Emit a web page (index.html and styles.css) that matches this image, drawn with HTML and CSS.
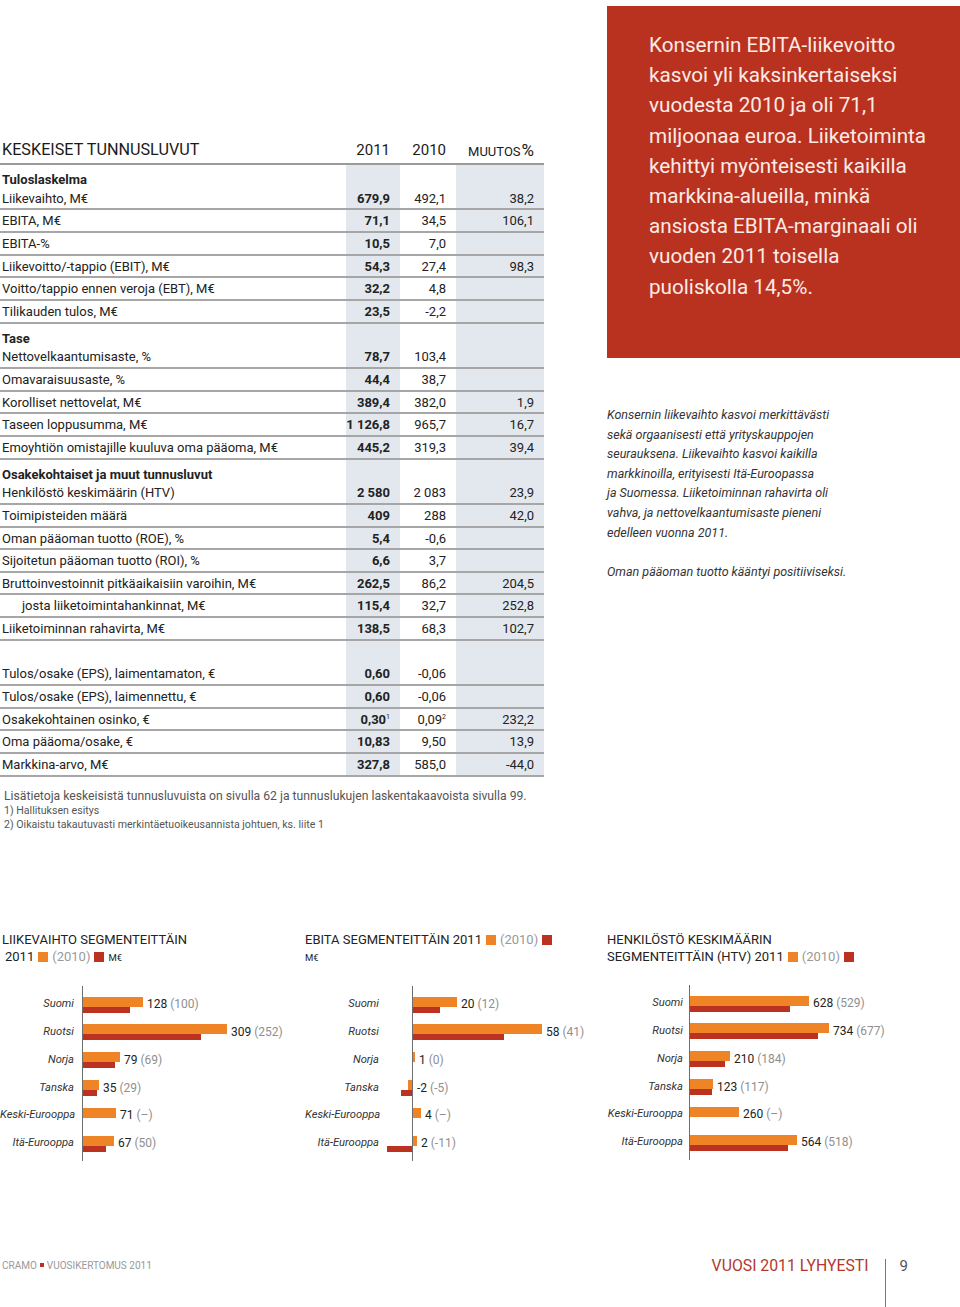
FILE: index.html
```html
<!DOCTYPE html>
<html lang="fi">
<head>
<meta charset="utf-8">
<title>Vuosi 2011 lyhyesti</title>
<link rel="stylesheet" href="styles.css">
</head>
<body>
<div class="page">
  <div class="top">
    <div class="left">
      <div class="thead">
        <div class="ttl">KESKEISET TUNNUSLUVUT</div>
        <div class="h">2011</div>
        <div class="h">2010</div>
        <div class="h"><span class="sc">MUUTOS</span><span class="pc">%</span></div>
      </div>
      <div class="tbody">
        <div class="row sec"><div class="lab">Tuloslaskelma</div><div class="v a"></div><div class="v b"></div><div class="v c"></div></div>
        <div class="row"><div class="lab">Liikevaihto, M€</div><div class="v a">679,9</div><div class="v b">492,1</div><div class="v c">38,2</div></div>
        <div class="row"><div class="lab">EBITA, M€</div><div class="v a">71,1</div><div class="v b">34,5</div><div class="v c">106,1</div></div>
        <div class="row"><div class="lab">EBITA-%</div><div class="v a">10,5</div><div class="v b">7,0</div><div class="v c"></div></div>
        <div class="row"><div class="lab">Liikevoitto/-tappio (EBIT), M€</div><div class="v a">54,3</div><div class="v b">27,4</div><div class="v c">98,3</div></div>
        <div class="row"><div class="lab">Voitto/tappio ennen veroja (EBT), M€</div><div class="v a">32,2</div><div class="v b">4,8</div><div class="v c"></div></div>
        <div class="row"><div class="lab">Tilikauden tulos, M€</div><div class="v a">23,5</div><div class="v b">-2,2</div><div class="v c"></div></div>
        <div class="row sec"><div class="lab">Tase</div><div class="v a"></div><div class="v b"></div><div class="v c"></div></div>
        <div class="row"><div class="lab">Nettovelkaantumisaste, %</div><div class="v a">78,7</div><div class="v b">103,4</div><div class="v c"></div></div>
        <div class="row"><div class="lab">Omavaraisuusaste, %</div><div class="v a">44,4</div><div class="v b">38,7</div><div class="v c"></div></div>
        <div class="row"><div class="lab">Korolliset nettovelat, M€</div><div class="v a">389,4</div><div class="v b">382,0</div><div class="v c">1,9</div></div>
        <div class="row"><div class="lab">Taseen loppusumma, M€</div><div class="v a">1 126,8</div><div class="v b">965,7</div><div class="v c">16,7</div></div>
        <div class="row"><div class="lab">Emoyhtiön omistajille kuuluva oma pääoma, M€</div><div class="v a">445,2</div><div class="v b">319,3</div><div class="v c">39,4</div></div>
        <div class="row sec"><div class="lab">Osakekohtaiset ja muut tunnusluvut</div><div class="v a"></div><div class="v b"></div><div class="v c"></div></div>
        <div class="row"><div class="lab">Henkilöstö keskimäärin (HTV)</div><div class="v a">2 580</div><div class="v b">2 083</div><div class="v c">23,9</div></div>
        <div class="row"><div class="lab">Toimipisteiden määrä</div><div class="v a">409</div><div class="v b">288</div><div class="v c">42,0</div></div>
        <div class="row"><div class="lab">Oman pääoman tuotto (ROE), %</div><div class="v a">5,4</div><div class="v b">-0,6</div><div class="v c"></div></div>
        <div class="row"><div class="lab">Sijoitetun pääoman tuotto (ROI), %</div><div class="v a">6,6</div><div class="v b">3,7</div><div class="v c"></div></div>
        <div class="row"><div class="lab">Bruttoinvestoinnit pitkäaikaisiin varoihin, M€</div><div class="v a">262,5</div><div class="v b">86,2</div><div class="v c">204,5</div></div>
        <div class="row"><div class="lab ind">josta liiketoimintahankinnat, M€</div><div class="v a">115,4</div><div class="v b">32,7</div><div class="v c">252,8</div></div>
        <div class="row"><div class="lab">Liiketoiminnan rahavirta, M€</div><div class="v a">138,5</div><div class="v b">68,3</div><div class="v c">102,7</div></div>
        <div class="row sec"><div class="lab"></div><div class="v a"></div><div class="v b"></div><div class="v c"></div></div>
        <div class="row"><div class="lab">Tulos/osake (EPS), laimentamaton, €</div><div class="v a">0,60</div><div class="v b">-0,06</div><div class="v c"></div></div>
        <div class="row"><div class="lab">Tulos/osake (EPS), laimennettu, €</div><div class="v a">0,60</div><div class="v b">-0,06</div><div class="v c"></div></div>
        <div class="row"><div class="lab">Osakekohtainen osinko, €</div><div class="v a">0,30<sup>1</sup></div><div class="v b">0,09<sup>2</sup></div><div class="v c">232,2</div></div>
        <div class="row"><div class="lab">Oma pääoma/osake, €</div><div class="v a">10,83</div><div class="v b">9,50</div><div class="v c">13,9</div></div>
        <div class="row"><div class="lab">Markkina-arvo, M€</div><div class="v a">327,8</div><div class="v b">585,0</div><div class="v c">-44,0</div></div>
      </div>
      <div class="notes">
        <p class="n1">Lisätietoja keskeisistä tunnusluvuista on sivulla 62 ja tunnuslukujen laskentakaavoista sivulla 99.</p>
        <p class="n2">1) Hallituksen esitys</p>
        <p class="n2">2) Oikaistu takautuvasti merkintäetuoikeusannista johtuen, ks. liite 1</p>
      </div>
    </div>
    <div class="right">
      <div class="redbox">
        <p>Konsernin EBITA-liikevoitto<br>kasvoi yli kaksinkertaiseksi<br>vuodesta 2010 ja oli 71,1<br>miljoonaa euroa. Liiketoiminta<br>kehittyi myönteisesti kaikilla<br>markkina-alueilla, minkä<br>ansiosta EBITA-marginaali oli<br>vuoden 2011 toisella<br>puoliskolla 14,5%.</p>
      </div>
      <p class="ital">Konsernin liikevaihto kasvoi merkittävästi<br>sekä orgaanisesti että yrityskauppojen<br>seurauksena. Liikevaihto kasvoi kaikilla<br>markkinoilla, erityisesti Itä-Euroopassa<br>ja Suomessa. Liiketoiminnan rahavirta oli<br>vahva, ja nettovelkaantumisaste pieneni<br>edelleen vuonna 2011.</p>
      <p class="ital second">Oman pääoman tuotto kääntyi positiiviseksi.</p>
    </div>
  </div>

  <div class="charts">
    <div class="chart ch1">
      <div class="ctitle">LIIKEVAIHTO SEGMENTEITTÄIN<br><span class="sub">2011</span><i class="sq o"></i><span class="g">(2010)</span><i class="sq r"></i><span class="unit">M€</span></div>
      <div class="cbody">
        <div class="labels"><div>Suomi</div><div>Ruotsi</div><div>Norja</div><div>Tanska</div><div>Keski-Eurooppa</div><div>Itä-Eurooppa</div></div>
        <div class="plot">
          <div class="brow"><div class="bars"><div class="bo" style="width:60px"></div><div class="br" style="width:47px"></div></div><span class="val">128 <span class="g">(100)</span></span></div>
          <div class="brow"><div class="bars"><div class="bo" style="width:144px"></div><div class="br" style="width:118px"></div></div><span class="val">309 <span class="g">(252)</span></span></div>
          <div class="brow"><div class="bars"><div class="bo" style="width:37px"></div><div class="br" style="width:32px"></div></div><span class="val">79 <span class="g">(69)</span></span></div>
          <div class="brow"><div class="bars"><div class="bo" style="width:16px"></div><div class="br" style="width:14px"></div></div><span class="val">35 <span class="g">(29)</span></span></div>
          <div class="brow"><div class="bars"><div class="bo" style="width:33px"></div><div class="br" style="width:0px"></div></div><span class="val">71 <span class="g">(–)</span></span></div>
          <div class="brow"><div class="bars"><div class="bo" style="width:31px"></div><div class="br" style="width:23px"></div></div><span class="val">67 <span class="g">(50)</span></span></div>
        </div>
      </div>
    </div>

    <div class="chart ch2">
      <div class="ctitle">EBITA SEGMENTEITTÄIN 2011<i class="sq o"></i><span class="g">(2010)</span><i class="sq r"></i><br><span class="unit">M€</span></div>
      <div class="cbody">
        <div class="labels"><div>Suomi</div><div>Ruotsi</div><div>Norja</div><div>Tanska</div><div>Keski-Eurooppa</div><div>Itä-Eurooppa</div></div>
        <div class="negcol">
          <div class="brow"><div class="bars"><div class="bo" style="width:0px"></div><div class="br" style="width:0px"></div></div></div>
          <div class="brow"><div class="bars"><div class="bo" style="width:0px"></div><div class="br" style="width:0px"></div></div></div>
          <div class="brow"><div class="bars"><div class="bo" style="width:0px"></div><div class="br" style="width:0px"></div></div></div>
          <div class="brow"><div class="bars"><div class="bo" style="width:4px"></div><div class="br" style="width:11px"></div></div></div>
          <div class="brow"><div class="bars"><div class="bo" style="width:0px"></div><div class="br" style="width:0px"></div></div></div>
          <div class="brow"><div class="bars"><div class="bo" style="width:0px"></div><div class="br" style="width:25px"></div></div></div>
        </div>
        <div class="plot">
          <div class="brow"><div class="bars"><div class="bo" style="width:44px"></div><div class="br" style="width:27px"></div></div><span class="val">20 <span class="g">(12)</span></span></div>
          <div class="brow"><div class="bars"><div class="bo" style="width:129px"></div><div class="br" style="width:91px"></div></div><span class="val">58 <span class="g">(41)</span></span></div>
          <div class="brow"><div class="bars"><div class="bo" style="width:2px"></div><div class="br" style="width:0px"></div></div><span class="val">1 <span class="g">(0)</span></span></div>
          <div class="brow"><div class="bars"><div class="bo" style="width:0px"></div><div class="br" style="width:0px"></div></div><span class="val">-2 <span class="g">(-5)</span></span></div>
          <div class="brow"><div class="bars"><div class="bo" style="width:8px"></div><div class="br" style="width:0px"></div></div><span class="val">4 <span class="g">(–)</span></span></div>
          <div class="brow"><div class="bars"><div class="bo" style="width:4px"></div><div class="br" style="width:0px"></div></div><span class="val">2 <span class="g">(-11)</span></span></div>
        </div>
      </div>
    </div>

    <div class="chart ch3">
      <div class="ctitle">HENKILÖSTÖ KESKIMÄÄRIN<br>SEGMENTEITTÄIN (HTV) 2011<i class="sq o"></i><span class="g">(2010)</span><i class="sq r"></i></div>
      <div class="cbody">
        <div class="labels"><div>Suomi</div><div>Ruotsi</div><div>Norja</div><div>Tanska</div><div>Keski-Eurooppa</div><div>Itä-Eurooppa</div></div>
        <div class="plot">
          <div class="brow"><div class="bars"><div class="bo" style="width:119px"></div><div class="br" style="width:100px"></div></div><span class="val">628 <span class="g">(529)</span></span></div>
          <div class="brow"><div class="bars"><div class="bo" style="width:139px"></div><div class="br" style="width:128px"></div></div><span class="val">734 <span class="g">(677)</span></span></div>
          <div class="brow"><div class="bars"><div class="bo" style="width:40px"></div><div class="br" style="width:35px"></div></div><span class="val">210 <span class="g">(184)</span></span></div>
          <div class="brow"><div class="bars"><div class="bo" style="width:23px"></div><div class="br" style="width:22px"></div></div><span class="val">123 <span class="g">(117)</span></span></div>
          <div class="brow"><div class="bars"><div class="bo" style="width:49px"></div><div class="br" style="width:0px"></div></div><span class="val">260 <span class="g">(–)</span></span></div>
          <div class="brow"><div class="bars"><div class="bo" style="width:107px"></div><div class="br" style="width:98px"></div></div><span class="val">564 <span class="g">(518)</span></span></div>
        </div>
      </div>
    </div>
  </div>

  <footer class="foot">
    <div class="fl">CRAMO<i class="dot"></i>VUOSIKERTOMUS 2011</div>
    <div class="fr"><span class="sect">VUOSI 2011 LYHYESTI</span><span class="pn">9</span></div>
  </footer>
</div>
</body>
</html>
```

FILE: styles.css
```css
* { box-sizing: border-box; }

body {
  margin: 0;
  background: #fff;
  color: #222;
  font-family: Roboto, "DejaVu Sans", sans-serif;
}

.page {
  width: 960px;
}

.top {
  display: grid;
  grid-template-columns: 544px 353px;
  column-gap: 63px;
  align-items: start;
}

/* ---------- key figures table ---------- */
.left {
  padding-top: 137px;
}

.thead,
.row {
  display: grid;
  grid-template-columns: 346px 54px 56px 88px;
}

.thead {
  height: 28px;
  border-bottom: 2px solid #9a9a9a;
  line-height: 26px;
  font-size: 15px;
  color: #1a1a1a;
}

.thead .ttl {
  padding-left: 2px;
  font-size: 16.2px;
}

.thead .h {
  text-align: right;
  padding-right: 10px;
  white-space: nowrap;
}

.thead .sc {
  font-size: 13px;
  margin-right: 1px;
}

.thead .pc {
  font-size: 17px;
}

.row {
  height: 22.67px;
  border-bottom: 2px solid #a6a6a6;
  font-size: 13px;
  line-height: 18.67px;
  padding-top: 2px;
  color: #222;
}

.row.sec {
  border-bottom: 0;
  padding-top: 0;
}

.row.sec .lab {
  font-weight: 700;
  line-height: 16px;
  padding-top: 7px;
}

.lab {
  padding-left: 2px;
  white-space: nowrap;
}

.lab.ind {
  padding-left: 22px;
}

.v {
  text-align: right;
  padding-right: 10px;
  white-space: nowrap;
  margin-top: -2px;
  padding-top: 2px;
}

.row.sec .v {
  margin-top: 0;
  padding-top: 0;
}

.v.a {
  background: #e3e8ee;
  font-weight: 700;
}

.v.c {
  background: #e3e8ee;
}

.v sup {
  font-size: 7px;
  line-height: 0;
  vertical-align: 5px;
  font-weight: 400;
}

.notes {
  padding-left: 4px;
  color: #555;
}

.notes p {
  margin: 0;
}

.notes .n1 {
  margin-top: 11px;
  font-size: 12.2px;
  line-height: 16px;
}

.notes .n2 {
  font-size: 10.6px;
  line-height: 14.5px;
}

/* ---------- right column ---------- */
.redbox {
  margin-top: 6px;
  height: 352px;
  background: #b9321f;
  color: #fbebe6;
  padding: 24px 10px 0 42px;
}

.redbox p {
  margin: 0;
  font-size: 20.7px;
  line-height: 30.2px;
  white-space: nowrap;
}

.ital {
  margin: 47px 0 0;
  font-style: italic;
  font-size: 12.5px;
  line-height: 19.6px;
  color: #333;
  white-space: nowrap;
}

.ital.second {
  margin-top: 19.6px;
}

/* ---------- charts ---------- */
.charts {
  display: grid;
  grid-template-columns: 305px 302px 353px;
  margin-top: 98px;
}

.ctitle {
  font-size: 13px;
  line-height: 17px;
  color: #222;
  padding-left: 2px;
  white-space: nowrap;
}

.ch2 .ctitle,
.ch3 .ctitle {
  padding-left: 0;
}

.ctitle .sub {
  margin-left: 3px;
}

.ctitle .g {
  color: #999;
}

.ctitle .unit {
  font-size: 9.5px;
}

.sq {
  display: inline-block;
  width: 10px;
  height: 10px;
  margin: 0 4px;
  vertical-align: -1px;
}

.sq.o { background: #ef8426; }
.sq.r { background: #bb3320; }

.cbody {
  display: flex;
  margin-top: 20.5px;
}

.labels {
  width: 82px;
  padding: 4px 8px 4px 0;
  text-align: right;
  font-style: italic;
  font-size: 11.2px;
  color: #333;
}

.ch2 .labels {
  width: 74px;
  padding-right: 0;
}

.ch3 .labels {
  width: 82px;
  padding-right: 6px;
}

.labels div {
  height: 27.8px;
  line-height: 27.8px;
  white-space: nowrap;
}

.negcol {
  width: 33px;
  padding: 4px 0;
}

.negcol .bars {
  align-items: flex-end;
  width: 100%;
}

.plot {
  border-left: 1px solid #6e6e6e;
  padding: 4px 0;
  flex: 1;
}

.brow {
  height: 27.8px;
  display: flex;
  align-items: center;
}

.bars {
  display: flex;
  flex-direction: column;
  padding-top: 1px;
}

.bo {
  height: 10px;
  background: #ef8426;
}

.br {
  height: 6px;
  background: #bb3320;
}

.val {
  margin-left: 4px;
  font-size: 12px;
  color: #222;
  white-space: nowrap;
}

.val .g {
  color: #8f8f8f;
}

/* ---------- footer ---------- */
.foot {
  display: flex;
  justify-content: space-between;
  align-items: flex-start;
  margin-top: 98px;
  padding: 0 52px 0 2px;
  height: 49px;
}

.fl {
  font-size: 10px;
  line-height: 14px;
  color: #999;
  white-space: nowrap;
}

.fl .dot {
  display: inline-block;
  width: 4px;
  height: 4px;
  background: #b9321f;
  margin: 0 3px;
  vertical-align: 2px;
}

.fr {
  display: flex;
  align-items: flex-start;
  height: 49px;
}

.sect {
  font-size: 15.8px;
  line-height: 14px;
  color: #b3382b;
  padding-right: 16px;
}

.pn {
  border-left: 1px solid #777;
  height: 49px;
  padding-left: 14px;
  font-size: 15px;
  line-height: 14px;
  color: #555;
}
```
